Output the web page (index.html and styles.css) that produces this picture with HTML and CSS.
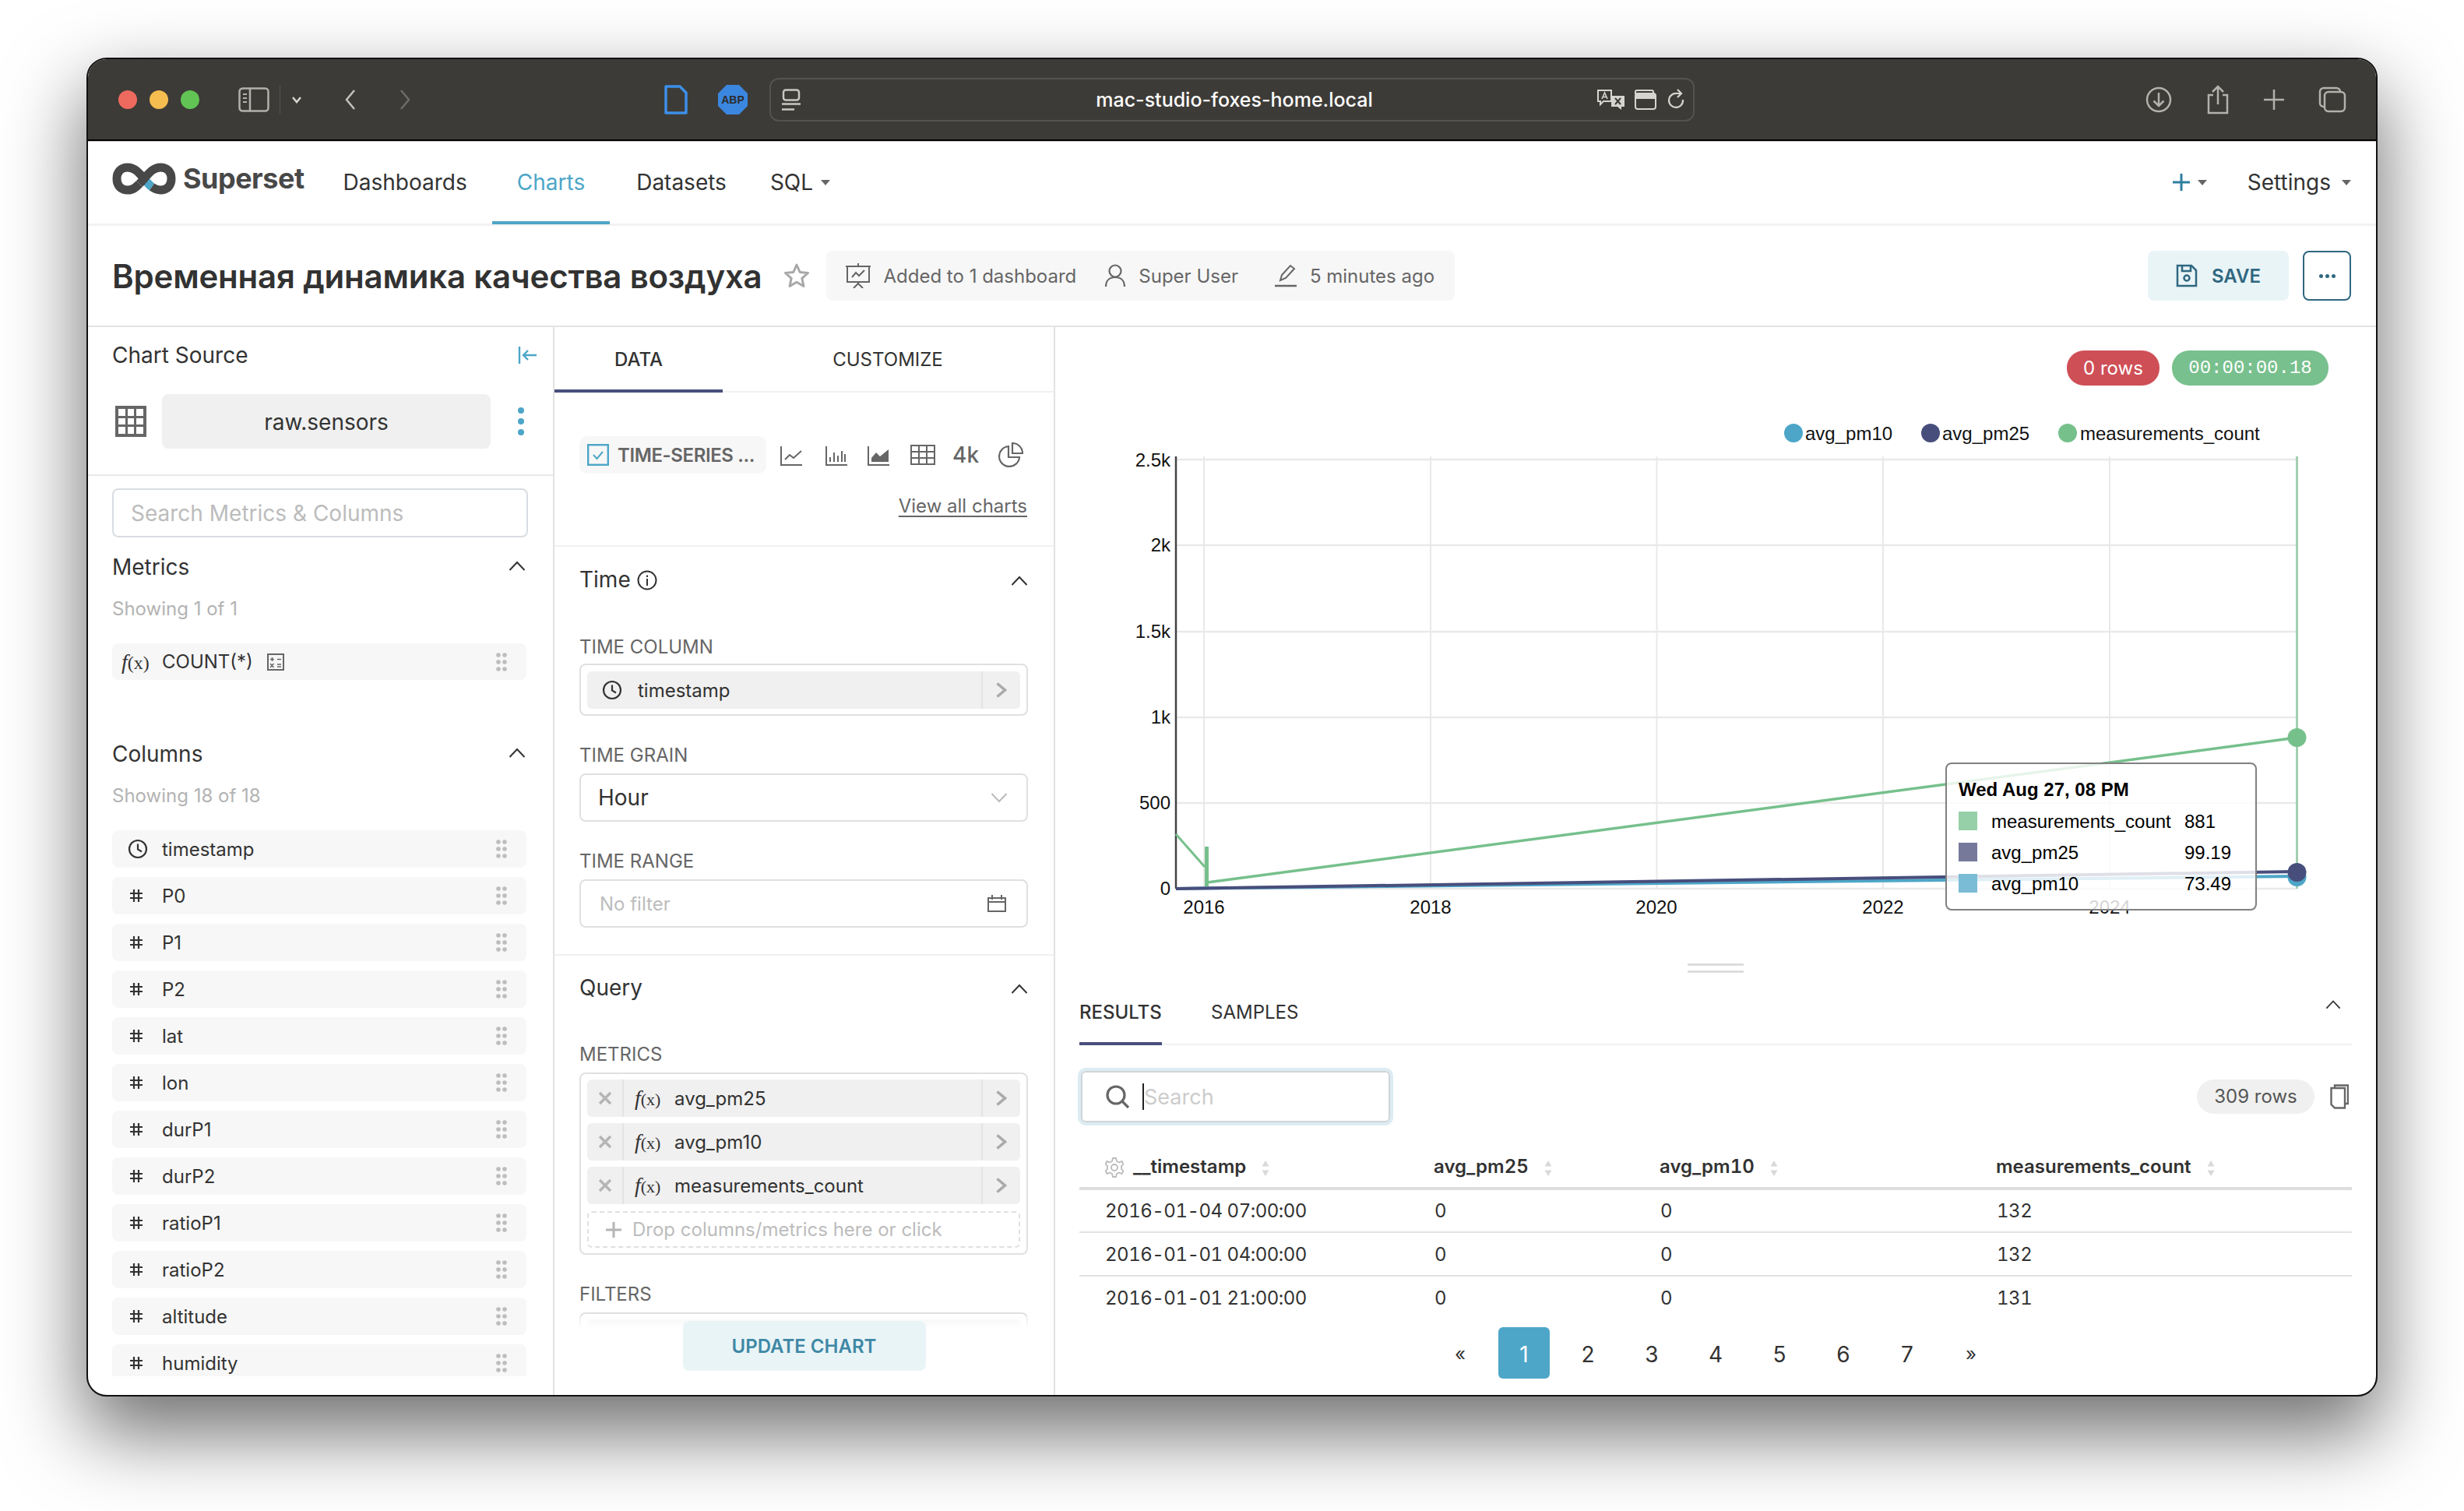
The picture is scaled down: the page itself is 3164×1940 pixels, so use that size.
FILE: index.html
```html
<!DOCTYPE html>
<html lang="en">
<head>
  <meta charset="UTF-8" />
  <meta name="viewport" content="width=device-width, initial-scale=1" />
  <title>Superset Chart</title>
  <link rel="stylesheet" href="styles.css">
</head>
<body>

  <svg class="defs" aria-hidden="true">
    <symbol id="i-drag" viewBox="0 0 14 24"><g fill="#bdbdbd"><circle cx="3" cy="3" r="2.8"/><circle cx="11" cy="3" r="2.8"/><circle cx="3" cy="12" r="2.8"/><circle cx="11" cy="12" r="2.8"/><circle cx="3" cy="21" r="2.8"/><circle cx="11" cy="21" r="2.8"/></g></symbol>
    <symbol id="i-hash" viewBox="0 0 18 18"><path d="M6 1v16M12 1v16M1 6h16M1 12h16" fill="none" stroke="#333" stroke-width="2.2"/></symbol>
    <symbol id="i-clock" viewBox="0 0 26 26"><circle cx="13" cy="13" r="11" fill="none" stroke="#333" stroke-width="2.2"/><path d="M13 6.5V13.5L18 16.5" fill="none" stroke="#333" stroke-width="2.2"/></symbol>
    <symbol id="i-up" viewBox="0 0 22 14"><path d="M1.5 12L11 2L20.500 12" fill="none" stroke="#333" stroke-width="2"/></symbol>
    <symbol id="i-right" viewBox="0 0 14 20"><path d="M1.500 1.500L11.500 10L1.500 18.500" fill="none" stroke="#aaa" stroke-width="3.600"/></symbol>
    <symbol id="i-close" viewBox="0 0 18 18"><path d="M2 2L16 16M16 2L2 16" fill="none" stroke="#b5b5b5" stroke-width="3.400"/></symbol>
    <symbol id="i-sort" viewBox="0 0 10 22"><path d="M5 1L9.500 8.500H.5ZM5 21L.5 13.500H9.500Z" fill="#d9d9d9"/></symbol>
  </svg>

  <div class="window">

    <div class="titlebar">
      <div class="lights"><span class="light red"></span><span class="light yellow"></span><span class="light green"></span></div>
      <svg class="tb-sidebar" width="40" height="32" viewBox="0 0 40 32"><rect x="1.500" y="1.500" width="37" height="29" rx="4" fill="none" stroke="#b3b1ac" stroke-width="2.500"/><path d="M15 2V30" stroke="#b3b1ac" stroke-width="2.500"/><path d="M6 9h5M6 14h5M6 19h5" stroke="#b3b1ac" stroke-width="2"/></svg>
      <span class="tb-sep"></span>
      <svg class="tb-caret" width="14" height="10" viewBox="0 0 14 10"><path d="M2 2L7 8L12 2" fill="none" stroke="#d6d4cf" stroke-width="2.500"/></svg>
      <svg class="tb-back" width="16" height="28" viewBox="0 0 16 28"><path d="M13 2L3 14L13 26" fill="none" stroke="#c4c2bd" stroke-width="2.500"/></svg>
      <svg class="tb-forward" width="16" height="28" viewBox="0 0 16 28"><path d="M3 2L13 14L3 26" fill="none" stroke="#6e6c68" stroke-width="2.500"/></svg>
      <svg class="tb-doc" width="30" height="38" viewBox="0 0 30 38"><path d="M2 2H20L28 10V36H2Z" fill="none" stroke="#3d8fe8" stroke-width="3.500" stroke-linejoin="round"/></svg>
      <svg class="tb-abp" width="38" height="38" viewBox="0 0 38 38"><path d="M11 0H27L38 11V27L27 38H11L0 27V11Z" fill="#3b87e0"/><text x="19" y="24" text-anchor="middle" class="abp-text">ABP</text></svg>
      <div class="urlbar">
        <svg class="url-reader" width="24" height="28" viewBox="0 0 24 28"><rect x="2" y="1.500" width="20" height="13" rx="3" fill="none" stroke="#c9c7c2" stroke-width="2.500"/><path d="M0 19.500H24M0 26.500H16" stroke="#c9c7c2" stroke-width="2.500"/></svg>
        <span class="url-text">mac-studio-foxes-home.local</span>
        <svg class="url-translate" width="40" height="28" viewBox="0 0 40 28"><path d="M3 2H20V16H10L6 20V16H3Z" fill="none" stroke="#d6d4cf" stroke-width="2"/><path d="M8 13L11.500 5L15 13M9.500 10.500H13.500" fill="none" stroke="#d6d4cf" stroke-width="1.600"/><path d="M20 9H37V23H33V27L28 23H20Z" fill="#d6d4cf"/><path d="M25 12L32 20M32 12L25 20" stroke="#3d3b37" stroke-width="2"/></svg>
        <svg class="url-tabs" width="32" height="26" viewBox="0 0 32 26"><rect x="5" y="5" width="26" height="20" rx="3" fill="none" stroke="#d6d4cf" stroke-width="2"/><path d="M5 6V3C5 2 6 1 7 1H26C27 1 28 2 28 3V5" fill="none" stroke="#d6d4cf" stroke-width="2"/><path d="M6 6H30V12H6Z" fill="#d6d4cf"/></svg>
        <svg class="url-reload" width="24" height="28" viewBox="0 0 24 28"><path d="M20 14A9 9 0 1 1 12 6H17" fill="none" stroke="#d6d4cf" stroke-width="2.200"/><path d="M13 1L18 6L13 11" fill="none" stroke="#d6d4cf" stroke-width="2.200"/></svg>
      </div>
      <div class="tb-right">
        <svg width="34" height="34" viewBox="0 0 34 34"><circle cx="17" cy="17" r="15" fill="none" stroke="#b3b1ac" stroke-width="2.500"/><path d="M17 8V25M10.500 18.500L17 25L23.500 18.500" fill="none" stroke="#b3b1ac" stroke-width="2.500"/></svg>
        <svg width="30" height="38" viewBox="0 0 30 38"><path d="M9 13H3V36H27V13H21M15 25V2M8 9L15 2L22 9" fill="none" stroke="#b3b1ac" stroke-width="2.500"/></svg>
        <svg width="26" height="26" viewBox="0 0 26 26"><path d="M13 0V26M0 13H26" stroke="#b3b1ac" stroke-width="2.500"/></svg>
        <svg width="36" height="34" viewBox="0 0 36 34"><rect x="8" y="7" width="26" height="25" rx="5" fill="none" stroke="#b3b1ac" stroke-width="2.500"/><path d="M8 26H7C4 26 2 24 2 21V7C2 4 4 2 7 2H23C26 2 28 4 28 7" fill="none" stroke="#b3b1ac" stroke-width="2.500"/></svg>
      </div>
    </div>

    <nav class="topnav">
      <div class="brand">
        <svg width="82" height="41" viewBox="0 0 82 41"><path d="M41 20.500C33 11 28 6 20 6C11 6 6 12 6 20.500C6 29 11 35 20 35C27 35 31 31 35 27" fill="none" stroke="#484848" stroke-width="11"/><path d="M41 20.500C45 25.500 48 29 51 31" fill="none" stroke="#4da6c8" stroke-width="11"/><path d="M35 27C37 25 39 23 41 20.500C49 11 54 6 62 6C71 6 76 12 76 20.500C76 29 71 35 62 35C57 35 54 33 51 31" fill="none" stroke="#484848" stroke-width="11"/></svg>
        <span class="brand-name">Superset</span>
      </div>
      <a class="nav-item">Dashboards</a>
      <a class="nav-item active">Charts</a>
      <a class="nav-item datasets">Datasets</a>
      <a class="nav-item sql">SQL<i class="caret"></i></a>
      <div class="nav-right">
        <a class="nav-item nav-plus"><svg width="22" height="22" viewBox="0 0 22 22"><path d="M11 0V22M0 11H22" stroke="#2f7f9f" stroke-width="3"/></svg><i class="caret"></i></a>
        <a class="nav-item nav-settings">Settings<i class="caret"></i></a>
      </div>
    </nav>

    <header class="chart-head">
      <h1 class="chart-title">Временная динамика качества воздуха</h1>
      <svg class="star" width="34" height="34" viewBox="0 0 34 34"><path d="M17 3L21.200 12.500L31.500 13.500L23.800 20.300L26 30.500L17 25.200L8 30.500L10.200 20.300L2.500 13.500L12.800 12.500Z" fill="none" stroke="#a8a8a8" stroke-width="3" stroke-linejoin="round"/></svg>
      <div class="meta-pill">
        <svg width="32" height="32" viewBox="0 0 32 32"><rect x="2" y="4" width="28" height="20" fill="none" stroke="#666" stroke-width="2"/><path d="M16 0V4M0 4H32M8 18L13 12L17 16L24 9M16 24V27M10 32L16 26L22 32" fill="none" stroke="#666" stroke-width="2"/></svg>
        <span>Added to 1 dashboard</span>
        <svg class="meta-gap" width="28" height="30" viewBox="0 0 28 30"><circle cx="14" cy="9" r="7.500" fill="none" stroke="#666" stroke-width="2.200"/><path d="M2 29C2 21 7 17 14 17C21 17 26 21 26 29" fill="none" stroke="#666" stroke-width="2.200"/></svg>
        <span>Super User</span>
        <svg class="meta-gap edit" width="30" height="30" viewBox="0 0 30 30"><path d="M8 21L10 14L21 2L26 6L15 18Z" fill="none" stroke="#666" stroke-width="2"/><path d="M1 28H29" stroke="#666" stroke-width="2.500"/></svg>
        <span>5 minutes ago</span>
      </div>
      <div class="actions">
        <button class="btn-save"><svg width="28" height="30" viewBox="0 0 28 30"><path d="M2 2H20L26 8V28H2Z" fill="none" stroke="#2f6780" stroke-width="2.500"/><circle cx="14" cy="18" r="3.500" fill="none" stroke="#2f6780" stroke-width="2.500"/><path d="M8 2V9H19V2" fill="none" stroke="#2f6780" stroke-width="2.500"/></svg>SAVE</button>
        <button class="btn-more"><i></i><i></i><i></i></button>
      </div>
    </header>

    <main class="explore">

      <aside class="source-panel">
        <div class="source-top">
          <div class="source-title">
            <span>Chart Source</span>
            <svg width="24" height="22" viewBox="0 0 24 22"><path d="M2 0V22M24 11H7M13 5L7 11L13 17" fill="none" stroke="#4da6c8" stroke-width="2.400"/></svg>
          </div>
          <div class="source-row">
            <svg width="40" height="40" viewBox="0 0 40 40"><path d="M0 0H40V40H0Z" fill="#666"/><g fill="#fff"><rect x="4" y="4" width="9" height="9"/><rect x="16" y="4" width="8" height="9"/><rect x="27" y="4" width="9" height="9"/><rect x="4" y="16" width="9" height="8"/><rect x="16" y="16" width="8" height="8"/><rect x="27" y="16" width="9" height="8"/><rect x="4" y="27" width="9" height="9"/><rect x="16" y="27" width="8" height="9"/><rect x="27" y="27" width="9" height="9"/></g></svg>
            <div class="dataset-name">raw.sensors</div>
            <div class="kebab"><i></i><i></i><i></i></div>
          </div>
        </div>
        <div class="source-body">
          <div class="search-metrics">Search Metrics &amp; Columns</div>
          <div class="list-head metrics-head"><span>Metrics</span><svg width="22" height="14"><use href="#i-up"/></svg></div>
          <div class="showing">Showing 1 of 1</div>
          <div class="field-row metric-row">
            <span class="fx field-fx"><em>f</em>(x)</span>
            <span>COUNT(*)</span>
            <svg class="calc" width="22" height="22" viewBox="0 0 22 22"><rect x="1" y="1" width="20" height="20" fill="none" stroke="#666" stroke-width="2"/><path d="M4 7.500H9M6.500 5V10M13 7.500H18M4 13L8.500 18M8.500 13L4 18M13 14H18M13 17H18" stroke="#666" stroke-width="1.500"/></svg>
            <svg class="drag" width="14" height="24"><use href="#i-drag"/></svg>
          </div>
          <div class="list-head columns-head"><span>Columns</span><svg width="22" height="14"><use href="#i-up"/></svg></div>
          <div class="showing">Showing 18 of 18</div>
          <div class="column-list">
            <div class="field-row"><svg class="field-icon" width="26" height="26"><use href="#i-clock"/></svg><span>timestamp</span><svg class="drag" width="14" height="24"><use href="#i-drag"/></svg></div>
            <div class="field-row"><svg class="field-icon" width="18" height="18"><use href="#i-hash"/></svg><span>P0</span><svg class="drag" width="14" height="24"><use href="#i-drag"/></svg></div>
            <div class="field-row"><svg class="field-icon" width="18" height="18"><use href="#i-hash"/></svg><span>P1</span><svg class="drag" width="14" height="24"><use href="#i-drag"/></svg></div>
            <div class="field-row"><svg class="field-icon" width="18" height="18"><use href="#i-hash"/></svg><span>P2</span><svg class="drag" width="14" height="24"><use href="#i-drag"/></svg></div>
            <div class="field-row"><svg class="field-icon" width="18" height="18"><use href="#i-hash"/></svg><span>lat</span><svg class="drag" width="14" height="24"><use href="#i-drag"/></svg></div>
            <div class="field-row"><svg class="field-icon" width="18" height="18"><use href="#i-hash"/></svg><span>lon</span><svg class="drag" width="14" height="24"><use href="#i-drag"/></svg></div>
            <div class="field-row"><svg class="field-icon" width="18" height="18"><use href="#i-hash"/></svg><span>durP1</span><svg class="drag" width="14" height="24"><use href="#i-drag"/></svg></div>
            <div class="field-row"><svg class="field-icon" width="18" height="18"><use href="#i-hash"/></svg><span>durP2</span><svg class="drag" width="14" height="24"><use href="#i-drag"/></svg></div>
            <div class="field-row"><svg class="field-icon" width="18" height="18"><use href="#i-hash"/></svg><span>ratioP1</span><svg class="drag" width="14" height="24"><use href="#i-drag"/></svg></div>
            <div class="field-row"><svg class="field-icon" width="18" height="18"><use href="#i-hash"/></svg><span>ratioP2</span><svg class="drag" width="14" height="24"><use href="#i-drag"/></svg></div>
            <div class="field-row"><svg class="field-icon" width="18" height="18"><use href="#i-hash"/></svg><span>altitude</span><svg class="drag" width="14" height="24"><use href="#i-drag"/></svg></div>
            <div class="field-row"><svg class="field-icon" width="18" height="18"><use href="#i-hash"/></svg><span>humidity</span><svg class="drag" width="14" height="24"><use href="#i-drag"/></svg></div>
          </div>
        </div>
      </aside>

      <section class="control-panel">
        <div class="tabs control-tabs">
          <div class="tab active">DATA</div>
          <div class="tab">CUSTOMIZE</div>
        </div>
        <div class="viz-section">
          <div class="viz-row">
            <div class="viz-pill">
              <svg width="28" height="28" viewBox="0 0 28 28"><rect x="1.200" y="1.200" width="25.600" height="25.600" fill="none" stroke="#4da6c8" stroke-width="2.400"/><path d="M8 14L12.500 19L20 10" fill="none" stroke="#4da6c8" stroke-width="2"/></svg>
              <span>TIME-SERIES ...</span>
            </div>
            <svg class="viz-line" width="28" height="28" viewBox="0 0 28 28"><path d="M1 3V27H28" fill="none" stroke="#666" stroke-width="2"/><path d="M6 20L12 14L17 18L27 9" fill="none" stroke="#666" stroke-width="2"/></svg>
            <svg class="viz-bar" width="28" height="28" viewBox="0 0 28 28"><path d="M1 3V27H28" fill="none" stroke="#666" stroke-width="2"/><path d="M6 23V17M11 23V11M16 23V15M21 23V9M25 23V13" stroke="#666" stroke-width="2"/></svg>
            <svg class="viz-area" width="28" height="28" viewBox="0 0 28 28"><path d="M1 3V27H28" fill="none" stroke="#666" stroke-width="2"/><path d="M5 23V18L11 11L16 16L27 7V23Z" fill="#666"/></svg>
            <svg class="viz-table" width="32" height="26" viewBox="0 0 32 26"><path d="M1 1H31V25H1ZM1 9H31M1 17H31M11 1V25M21 1V25" fill="none" stroke="#666" stroke-width="2"/></svg>
            <span class="viz-4k">4k</span>
            <svg class="viz-pie" width="32" height="32" viewBox="0 0 32 32"><path d="M13 5A13 13 0 1 0 27 19H13Z" fill="none" stroke="#666" stroke-width="2.200"/><path d="M18 1A13 13 0 0 1 31 14H18Z" fill="none" stroke="#666" stroke-width="2.200"/></svg>
          </div>
          <a class="view-all">View all charts</a>
        </div>

        <div class="ctrl-section time-section">
          <div class="ctrl-head"><span class="ctrl-title">Time<svg class="info" width="26" height="26" viewBox="0 0 26 26"><circle cx="13" cy="13" r="11.500" fill="none" stroke="#333" stroke-width="2"/><path d="M13 11V20M13 6.500V9" stroke="#333" stroke-width="2"/></svg></span><svg width="22" height="14"><use href="#i-up"/></svg></div>
          <div class="ctrl-label first">TIME COLUMN</div>
          <div class="ctrl-box column-box">
            <div class="chip"><svg class="chip-clock" width="26" height="26"><use href="#i-clock"/></svg><span>timestamp</span><span class="chip-more"><svg width="14" height="20"><use href="#i-right"/></svg></span></div>
          </div>
          <div class="ctrl-label">TIME GRAIN</div>
          <div class="ctrl-box select-box"><span>Hour</span><svg width="22" height="14" viewBox="0 0 22 14"><path d="M1.500 2L11 12L20.500 2" fill="none" stroke="#bbb" stroke-width="2"/></svg></div>
          <div class="ctrl-label">TIME RANGE</div>
          <div class="ctrl-box range-box"><span>No filter</span><svg width="24" height="22" viewBox="0 0 24 22"><path d="M1 4H23V21H1ZM1 9H23M6 0V6M18 0V6" fill="none" stroke="#666" stroke-width="2"/></svg></div>
        </div>

        <div class="ctrl-section query-section">
          <div class="ctrl-head"><span class="ctrl-title">Query</span><svg width="22" height="14"><use href="#i-up"/></svg></div>
          <div class="ctrl-label metrics-label">METRICS</div>
          <div class="ctrl-box metrics-box">
            <div class="chip"><span class="chip-x"><svg width="18" height="18"><use href="#i-close"/></svg></span><span class="fx"><em>f</em>(x)</span><span>avg_pm25</span><span class="chip-more"><svg width="14" height="20"><use href="#i-right"/></svg></span></div>
            <div class="chip"><span class="chip-x"><svg width="18" height="18"><use href="#i-close"/></svg></span><span class="fx"><em>f</em>(x)</span><span>avg_pm10</span><span class="chip-more"><svg width="14" height="20"><use href="#i-right"/></svg></span></div>
            <div class="chip"><span class="chip-x"><svg width="18" height="18"><use href="#i-close"/></svg></span><span class="fx"><em>f</em>(x)</span><span>measurements_count</span><span class="chip-more"><svg width="14" height="20"><use href="#i-right"/></svg></span></div>
            <div class="drop-zone"><svg width="20" height="20" viewBox="0 0 20 20"><path d="M10 0V20M0 10H20" stroke="#b5b5b5" stroke-width="3"/></svg><span>Drop columns/metrics here or click</span></div>
          </div>
          <div class="ctrl-label">FILTERS</div>
          <div class="ctrl-box filters-box"><div class="chip"></div></div>
        </div>

        <div class="update-bar"><button class="btn-update">UPDATE CHART</button></div>
      </section>

      <section class="result-panel">
        <div class="chart-area">
          <div class="badges">
            <span class="badge rows">0 rows</span>
            <span class="badge timer">00:00:00.18</span>
          </div>
          <svg class="chart" width="1696" height="710" viewBox="1355 500 1696 710">
            <g class="legend">
              <circle cx="2303" cy="556" r="12" fill="#4da6c8"/><text x="2318" y="565">avg_pm10</text>
              <circle cx="2479" cy="556" r="12" fill="#484e7c"/><text x="2494" y="565">avg_pm25</text>
              <circle cx="2655" cy="556" r="12" fill="#76c08c"/><text x="2671" y="565">measurements_count</text>
            </g>
            <g class="grid">
              <path d="M1510 590H2949M1510 700H2949M1510 811H2949M1510 921H2949M1510 1031H2949M1510 1141H2949" stroke-width="2.500"/>
              <path d="M1546 586V1141M1837 586V1141M2127.500 586V1141M2418 586V1141M2709 586V1141" stroke-width="2"/>
            </g>
            <path d="M1510 586V1141" stroke="#444" stroke-width="2.500"/>
            <g class="ylabels">
              <text x="1503" y="599">2.5k</text>
              <text x="1503" y="708">2k</text>
              <text x="1503" y="819">1.5k</text>
              <text x="1503" y="929">1k</text>
              <text x="1503" y="1039">500</text>
              <text x="1503" y="1149">0</text>
            </g>
            <g class="xlabels">
              <text x="1546" y="1173">2016</text>
              <text x="1837" y="1173">2018</text>
              <text x="2127" y="1173">2020</text>
              <text x="2418" y="1173">2022</text>
              <text x="2709" y="1173">2024</text>
            </g>
            <path d="M2949.500 586V1141" stroke="#a2cfb0" stroke-width="3"/>
            <path d="M1510 1071L1547 1113" fill="none" stroke="#76c08c" stroke-width="3"/>
            <path d="M1549.500 1087V1138" stroke="#76c08c" stroke-width="5"/>
            <path d="M1550 1133L2949.500 947" fill="none" stroke="#76c08c" stroke-width="3.500"/>
            <path d="M1510 1141L2949.500 1125" fill="none" stroke="#4da6c8" stroke-width="4"/>
            <path d="M1510 1141L2949.500 1119" fill="none" stroke="#484e7c" stroke-width="4"/>
            <circle cx="2949.500" cy="947" r="12" fill="#76c08c"/>
            <circle cx="2949.500" cy="1126" r="12" fill="#4da6c8"/>
            <circle cx="2949.500" cy="1120" r="12" fill="#484e7c"/>
          </svg>
          <div class="tooltip">
            <div class="tooltip-title">Wed Aug 27, 08 PM</div>
            <div class="tooltip-row"><i class="swatch s-green"></i><span class="tooltip-name">measurements_count</span><span>881</span></div>
            <div class="tooltip-row"><i class="swatch s-navy"></i><span class="tooltip-name">avg_pm25</span><span>99.19</span></div>
            <div class="tooltip-row"><i class="swatch s-blue"></i><span class="tooltip-name">avg_pm10</span><span>73.49</span></div>
          </div>
        </div>

        <div class="splitter"></div>

        <div class="results">
          <div class="tabs result-tabs">
            <div class="tab active">RESULTS</div>
            <div class="tab">SAMPLES</div>
            <svg class="result-caret" width="20" height="14"><use href="#i-up"/></svg>
          </div>
          <div class="result-tools">
            <div class="result-search">
              <svg width="32" height="32" viewBox="0 0 32 32"><circle cx="14" cy="14" r="11" fill="none" stroke="#666" stroke-width="3.200"/><path d="M22 22L30 30" stroke="#666" stroke-width="3.200"/></svg>
              <span class="cursor"></span><span class="search-text">Search</span>
            </div>
            <span class="row-count">309 rows</span>
            <svg class="copy" width="24" height="32" viewBox="0 0 24 32"><path d="M6 5V1.500H23V25H19" fill="none" stroke="#666" stroke-width="2.400"/><path d="M1.500 5H19V30.500H6L1.500 26Z" fill="none" stroke="#666" stroke-width="2.400"/></svg>
          </div>
          <table class="result-table">
            <colgroup><col class="c1"><col class="c2"><col class="c3"><col class="c4"></colgroup>
            <thead>
              <tr>
                <th><svg class="gear" width="24" height="26" viewBox="0 0 24 26"><path d="M10 1H14L15 5L18 6.500L21.500 5L23.500 8.500L21 11V15L23.500 17.500L21.500 21L18 19.500L15 21L14 25H10L9 21L6 19.500L2.500 21L.5 17.500L3 15V11L.5 8.500L2.500 5L6 6.500L9 5Z" fill="none" stroke="#bbb" stroke-width="1.800"/><circle cx="12" cy="13" r="4" fill="none" stroke="#bbb" stroke-width="1.800"/></svg>__timestamp<svg class="sort" width="10" height="22"><use href="#i-sort"/></svg></th>
                <th>avg_pm25<svg class="sort" width="10" height="22"><use href="#i-sort"/></svg></th>
                <th>avg_pm10<svg class="sort" width="10" height="22"><use href="#i-sort"/></svg></th>
                <th>measurements_count<svg class="sort" width="10" height="22"><use href="#i-sort"/></svg></th>
              </tr>
            </thead>
            <tbody>
              <tr><td>2016-01-04 07:00:00</td><td>0</td><td>0</td><td>132</td></tr>
              <tr><td>2016-01-01 04:00:00</td><td>0</td><td>0</td><td>132</td></tr>
              <tr><td>2016-01-01 21:00:00</td><td>0</td><td>0</td><td>131</td></tr>
            </tbody>
          </table>
          <div class="pager">
            <a class="small">«</a><a class="current">1</a><a>2</a><a>3</a><a>4</a><a>5</a><a>6</a><a>7</a><a class="small">»</a>
          </div>
        </div>
      </section>

    </main>
  </div>

</body>
</html>
```

FILE: styles.css
```css
/* Reset & base */
* {
  box-sizing: border-box;
}
html, body {
  margin: 0;
  background: #fff;
}
body {
  width: 3164px;
  height: 1940px;
  padding: 74px 111px 0;
  overflow: hidden;
  font-family: Inter, "Noto Sans", sans-serif;
  font-size: 24px;
  color: #333;
}
.defs {
  position: absolute;
  width: 0;
  height: 0;
}
svg {
  display: block;
  flex: none;
}
button {
  font-family: inherit;
  border: none;
  padding: 0;
}

.window {
  width: 2942px;
  height: 1719px;
  border: 2px solid #111;
  border-radius: 26px;
  overflow: hidden;
  background: #fff;
  box-shadow: 0 44px 100px 4px rgba(0, 0, 0, 0.56);
  display: flex;
  flex-direction: column;
}

/* Browser chrome */
.titlebar {
  height: 105px;
  flex: none;
  background: #3d3b37;
  border-bottom: 2px solid #000;
  box-shadow: 0 1px 0 #ccc;
  display: flex;
  align-items: center;
  padding-left: 39px;
  position: relative;
  z-index: 1;
}
.lights {
  display: flex;
  gap: 16px;
}
.light {
  width: 24px;
  height: 24px;
  border-radius: 50%;
}
.red { background: #ee6a5f; }
.yellow { background: #f5bd4f; }
.green { background: #61c454; }
.tb-sidebar { margin-left: 50px; }
.tb-sep {
  width: 1px;
  height: 36px;
  margin-left: 13px;
  background: #55534f;
}
.tb-caret { margin-left: 14px; }
.tb-back { margin-left: 54px; }
.tb-forward { margin-left: 54px; }
.tb-doc { margin-left: 325px; }
.tb-abp { margin-left: 39px; }
.abp-text {
  font-family: "Liberation Sans", sans-serif;
  font-weight: 700;
  font-size: 14px;
  fill: #2b2b2b;
}
.urlbar {
  width: 1188px;
  height: 56px;
  margin-left: 28px;
  border: 2px solid #55534f;
  border-radius: 12px;
  display: flex;
  align-items: center;
  position: relative;
}
.url-reader { margin-left: 14px; }
.url-text {
  position: absolute;
  left: 410px;
  width: 370px;
  text-align: center;
  color: #fff;
  font-size: 25px;
  font-weight: 500;
}
.url-translate { margin-left: auto; }
.url-tabs { margin-left: 6px; }
.url-reload { margin-left: 14px; margin-right: 9px; }
.tb-right {
  display: flex;
  align-items: center;
  gap: 44px;
  margin-left: auto;
  margin-right: 38px;
}

/* Superset nav */
.topnav {
  height: 109px;
  flex: none;
  border-bottom: 3px solid #f2f2f2;
  padding-left: 31px;
  display: flex;
  align-items: flex-start;
  overflow: visible;
}
.brand {
  height: 106px;
  display: flex;
  align-items: center;
  gap: 9px;
  padding-bottom: 10px;
  margin-right: 50px;
}
.brand-name {
  font-weight: 700;
  font-size: 36px;
  letter-spacing: -0.5px;
  color: #484848;
}
.nav-item {
  height: 107px;
  display: flex;
  align-items: center;
  padding: 2px 32px 0;
  font-size: 28px;
  color: #333;
  border-bottom: 4px solid transparent;
}
.nav-item:nth-of-type(1) { padding-left: 0; }
.nav-item.active {
  color: #4da6c8;
  border-bottom-color: #4da6c8;
}
.nav-item.datasets { margin-left: 2px; }
.nav-item.sql { margin-left: -8px; }
.caret {
  width: 0;
  height: 0;
  margin-left: 10px;
  margin-top: 2px;
  border-left: 6px solid transparent;
  border-right: 6px solid transparent;
  border-top: 7px solid #666;
}
.nav-right {
  margin-left: auto;
  padding-right: 16px;
  display: flex;
  gap: 2px;
}
.nav-right .nav-item {
  padding: 2px 16px 0 24px;
}
.nav-right .nav-plus {
  padding-right: 26px;
}
.nav-settings .caret {
  margin-left: 14px;
}

/* Chart header */
.chart-head {
  height: 130px;
  flex: none;
  border-bottom: 2px solid #e2e2e2;
  padding: 0 32px 0 31px;
  display: flex;
  align-items: center;
}
.chart-title {
  margin: 0;
  font-size: 42px;
  font-weight: 600;
  letter-spacing: -0.2px;
  color: #323232;
  white-space: nowrap;
}
.star { margin-left: 28px; }
.meta-pill {
  height: 64px;
  margin-left: 21px;
  padding: 0 26px 0 25px;
  background: #f7f7f7;
  border-radius: 8px;
  display: flex;
  align-items: center;
  gap: 16px;
  color: #666;
}
.meta-pill svg.meta-gap { margin-left: 20px; }
.meta-pill svg.edit { margin-left: 30px; }
.actions {
  margin-left: auto;
  display: flex;
  gap: 18px;
}
.btn-save {
  width: 181px;
  height: 64px;
  border-radius: 8px;
  background: #e9f4f7;
  color: #2f6780;
  font-size: 24px;
  font-weight: 600;
  display: flex;
  align-items: center;
  justify-content: center;
  gap: 18px;
}
.btn-more {
  width: 62px;
  height: 64px;
  background: #fff;
  border: 2px solid #2f6780;
  border-radius: 8px;
  display: flex;
  align-items: center;
  justify-content: center;
  gap: 3px;
}
.btn-more i {
  width: 5px;
  height: 5px;
  border-radius: 50%;
  background: #2f6780;
}

.explore {
  flex: 1;
  min-height: 0;
  display: flex;
}

/* Left: chart source */
.source-panel {
  width: 599px;
  flex: none;
  border-right: 2px solid #e2e2e2;
  overflow: hidden;
}
.source-top {
  height: 191px;
  border-bottom: 2px solid #e8e8e8;
}
.source-title {
  height: 72px;
  padding: 0 21px 0 31px;
  font-size: 28px;
  display: flex;
  align-items: center;
  justify-content: space-between;
}
.source-row {
  margin-top: 14px;
  padding-left: 35px;
  display: flex;
  align-items: center;
}
.dataset-name {
  width: 422px;
  height: 70px;
  margin-left: 20px;
  border-radius: 8px;
  background: #f0f0f0;
  font-size: 28px;
  text-align: center;
  line-height: 72px;
}
.kebab {
  margin-left: 35px;
  display: flex;
  flex-direction: column;
  gap: 6px;
}
.kebab i {
  width: 8px;
  height: 8px;
  border-radius: 50%;
  background: #4da6c8;
}
.source-body {
  padding: 16px 32px 0 31px;
}
.search-metrics {
  height: 63px;
  border: 2px solid #d9dde2;
  border-radius: 8px;
  padding-left: 22px;
  font-size: 28px;
  line-height: 61px;
  color: #bcbcbc;
}
.list-head {
  height: 40px;
  font-size: 28px;
  display: flex;
  align-items: center;
  justify-content: space-between;
  padding-right: 3px;
}
.metrics-head { margin-top: 18px; }
.columns-head { margin-top: 75px; }
.list-head svg { margin-bottom: 3px; }
.showing {
  height: 34px;
  margin-top: 16px;
  line-height: 36px;
  color: #b3b3b3;
}
.field-row {
  height: 48px;
  width: 532px;
  margin-right: 2px;
  background: #f7f7f7;
  border-radius: 8px;
  padding-left: 64px;
  display: flex;
  align-items: center;
  position: relative;
  flex: none;
}
.metric-row {
  margin-top: 28px;
  height: 47px;
}
.field-icon {
  position: absolute;
  left: 22px;
}
.field-icon[width="26"] { left: 20px; }
.drag {
  position: absolute;
  left: 493px;
}
.fx {
  font-family: "Liberation Serif", serif;
  font-size: 24px;
  color: #333;
  white-space: nowrap;
}
.fx em {
  font-size: 28px;
}
.field-fx {
  position: absolute;
  left: 12px;
}
.calc { margin-left: 18px; }
.column-list {
  margin-top: 28px;
  height: 701px;
  overflow: hidden;
  display: flex;
  flex-direction: column;
  gap: 12px;
}

/* Middle: controls */
.control-panel {
  width: 643px;
  flex: none;
  border-right: 2px solid #e2e2e2;
  overflow: hidden;
  position: relative;
}
.tabs {
  display: flex;
  border-bottom: 2px solid #f0f0f0;
}
.control-tabs {
  height: 84px;
}
.tab {
  color: #323232;
  font-size: 24px;
  font-weight: 500;
}
.control-tabs .tab {
  width: 216px;
  height: 84px;
  text-align: center;
  line-height: 83px;
}
.control-tabs .tab:nth-child(2) { width: 208px; margin-left: 108px; font-weight: 400; }
.tab.active {
  border-bottom: 4px solid #484e7c;
}
.viz-section {
  padding: 56px 32px 35px;
  border-bottom: 2px solid #f0f0f0;
}
.viz-row {
  display: flex;
  align-items: center;
  height: 48px;
  color: #666;
}
.viz-pill {
  width: 240px;
  height: 48px;
  padding-left: 10px;
  background: #f7f7f7;
  border-radius: 10px;
  display: flex;
  align-items: center;
  gap: 11px;
  font-weight: 600;
  letter-spacing: -0.4px;
  white-space: nowrap;
}
.viz-line { margin-left: 18px; }
.viz-bar { margin-left: 30px; }
.viz-area { margin-left: 26px; }
.viz-table { margin-left: 27px; }
.viz-4k {
  margin-left: 22px;
  width: 34px;
  font-size: 28px;
  font-weight: 500;
}
.viz-pie { margin-left: 25px; }
.view-all {
  display: block;
  margin-top: 25px;
  height: 32px;
  line-height: 34px;
  text-align: right;
  padding-right: 2px;
  color: #666;
  text-decoration: underline;
  text-underline-offset: 4px;
}
.ctrl-section {
  padding: 0 33px 0 32px;
}
.time-section { padding-top: 22px; }
.query-section {
  margin-top: 34px;
  padding-top: 21px;
  border-top: 2px solid #f0f0f0;
}
.ctrl-head {
  height: 40px;
  font-size: 28px;
  display: flex;
  align-items: center;
  justify-content: space-between;
}
.ctrl-head svg { margin-top: 4px; }
.ctrl-title {
  display: flex;
  align-items: center;
  gap: 8px;
}
.ctrl-title .info { margin-top: 2px; }
.ctrl-label {
  height: 32px;
  margin-top: 34px;
  line-height: 33px;
  color: #666;
}
.ctrl-label.first { margin-top: 50px; }
.ctrl-label.metrics-label { margin-top: 49px; }
.ctrl-box {
  margin-top: 8px;
  border: 2px solid #e0e0e0;
  border-radius: 8px;
}
.column-box {
  margin-top: 6px;
  height: 67px;
  padding: 8px;
}
.chip {
  height: 48px;
  background: #f0f0f0;
  border-radius: 6px;
  display: flex;
  align-items: center;
  color: #323232;
}
.chip-clock { margin: 0 20px 0 19px; }
.chip-more {
  margin-left: auto;
  width: 50px;
  height: 100%;
  border-left: 2px solid #e3e3e3;
  display: flex;
  align-items: center;
  justify-content: center;
}
.chip-x {
  width: 47px;
  height: 100%;
  border-right: 2px solid #e3e3e3;
  display: flex;
  align-items: center;
  justify-content: center;
  margin-right: 14px;
}
.chip .fx {
  margin-right: 16px;
  width: 35px;
  font-size: 22px;
}
.select-box {
  height: 62px;
  padding: 0 24px 0 22px;
  display: flex;
  align-items: center;
  justify-content: space-between;
  font-size: 28px;
  color: #323232;
}
.range-box {
  height: 62px;
  padding: 0 26px 0 24px;
  display: flex;
  align-items: center;
  justify-content: space-between;
  color: #bcbcbc;
}
.metrics-box {
  height: 234px;
  padding: 7px 8px;
  display: flex;
  flex-direction: column;
  gap: 8px;
}
.drop-zone {
  height: 47px;
  margin-top: 1px;
  border: 2px dashed #e0e0e0;
  border-radius: 6px;
  padding-left: 22px;
  display: flex;
  align-items: center;
  gap: 14px;
  color: #bcbcbc;
  white-space: nowrap;
}
.filters-box {
  height: 120px;
  padding: 7px 8px;
}
.update-bar {
  position: absolute;
  left: 0;
  right: 0;
  bottom: 0;
  height: 101px;
  padding-top: 6px;
  background: linear-gradient(rgba(255, 255, 255, 0.4), #fff 16px);
  display: flex;
  justify-content: center;
}
.btn-update {
  width: 312px;
  height: 64px;
  border-radius: 8px;
  background: #e9f4f7;
  color: #3e88a5;
  font-size: 24px;
  font-weight: 600;
}

/* Right: chart + results */
.result-panel {
  flex: 1;
  min-width: 0;
}
.chart-area {
  height: 790px;
  position: relative;
}
.badges {
  height: 75px;
  padding: 30px 61px 0 0;
  margin-bottom: 5px;
  display: flex;
  justify-content: flex-end;
  gap: 16px;
}
.badge {
  height: 45px;
  border-radius: 22px;
  color: #fff;
  line-height: 45px;
  text-align: center;
}
.badge.rows {
  width: 119px;
  background: #cf4f57;
}
.badge.timer {
  width: 201px;
  background: #78c08d;
  font-family: "Liberation Mono", monospace;
}
.chart text {
  font-family: "Liberation Sans", sans-serif;
  font-size: 24px;
  fill: #111;
}
.grid path {
  fill: none;
  stroke: #e9e9e9;
}
.ylabels text { text-anchor: end; }
.xlabels text { text-anchor: middle; }
.tooltip {
  position: absolute;
  left: 1143px;
  top: 559px;
  width: 400px;
  height: 190px;
  padding: 19px 15px 0 15px;
  border: 2.500px solid #808080;
  border-radius: 8px;
  background: rgba(255, 255, 255, 0.82);
  font-family: "Liberation Sans", sans-serif;
  color: #000;
  line-height: 28px;
}
.tooltip-title {
  font-weight: 700;
  height: 28px;
  margin-bottom: 13px;
}
.tooltip-row {
  height: 40px;
  display: flex;
}
.swatch {
  width: 24px;
  height: 24px;
  margin-top: 1px;
  margin-right: 18px;
}
.s-green { background: #96d0a8; }
.s-navy { background: #77799b; }
.s-blue { background: #7abbd6; }
.tooltip-name { width: 248px; }
.splitter {
  width: 72px;
  height: 12px;
  margin: 27px auto 0;
  border-top: 3px solid #ddd;
  border-bottom: 3px solid #ddd;
}
.results {
  padding: 0 31px;
}
.result-tabs {
  height: 93px;
  align-items: flex-end;
  gap: 64px;
  position: relative;
}
.result-tabs .tab {
  height: 58px;
  line-height: 32px;
  margin-bottom: -2px;
  width: 106px;
  white-space: nowrap;
}
.result-tabs .tab:nth-child(2) { font-weight: 400; margin-left: -1px; border-bottom: 4px solid transparent; }
.result-caret {
  position: absolute;
  right: 14px;
  top: 34px;
}
.result-tools {
  margin-top: 33px;
  height: 66px;
  padding-left: 2px;
  display: flex;
  align-items: center;
}
.result-search {
  width: 397px;
  height: 66px;
  border: 2px solid #d0d4d8;
  border-radius: 6px;
  box-shadow: 0 0 0 4px #dcecf2;
  padding-left: 29px;
  display: flex;
  align-items: center;
}
.cursor {
  width: 2px;
  height: 34px;
  background: #222;
  margin-left: 16px;
}
.search-text {
  font-size: 27px;
  color: #ccc;
}
.row-count {
  margin-left: auto;
  width: 151px;
  height: 44px;
  border-radius: 22px;
  background: #f0f0f0;
  text-align: center;
  line-height: 44px;
  color: #555;
}
.copy {
  margin-left: 20px;
  margin-right: 4px;
}
.result-table {
  margin-top: 33px;
  width: 1634px;
  table-layout: fixed;
  border-collapse: collapse;
  font-variant-numeric: tabular-nums;
}
.c1 { width: 423px; }
.c2 { width: 290px; }
.c3 { width: 432px; }
.c4 { width: 489px; }
.result-table th {
  height: 52px;
  padding: 0 0 4px 32px;
  border-bottom: 4px solid #ddd;
  text-align: left;
  font-weight: 600;
  color: #323232;
}
.result-table th:first-child { padding-left: 33px; }
.result-table td {
  height: 56px;
  padding: 0 0 0 33px;
  border-bottom: 2px solid #e2e2e2;
  color: #323232;
  letter-spacing: -0.5px;
}
.result-table tr:last-child td { border-bottom: none; }
.gear {
  display: inline-block;
  vertical-align: -6px;
  margin-right: 12px;
}
.sort {
  display: inline-block;
  vertical-align: -5px;
  margin-left: 20px;
}
.pager {
  margin-top: 10px;
  display: flex;
  justify-content: center;
  gap: 16px;
}
.pager a {
  width: 66px;
  height: 66px;
  border-radius: 6px;
  text-align: center;
  line-height: 70px;
  font-size: 28px;
  color: #323232;
}
.pager a.small { font-size: 24px; }
.pager a.current {
  background: #4da6c8;
  color: #fff;
}
```
